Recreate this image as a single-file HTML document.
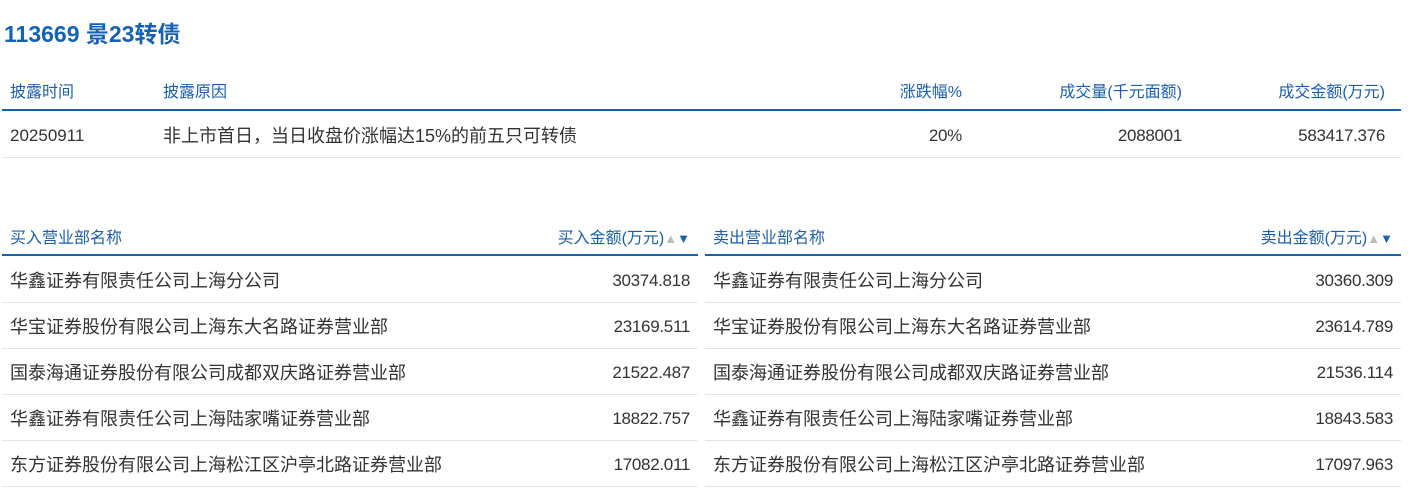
<!DOCTYPE html>
<html><head><meta charset="utf-8"><style>
body{margin:0;background:#fff;font-family:"Liberation Sans","Noto Sans CJK SC",sans-serif;color:#333;width:1413px;height:493px;overflow:hidden;position:relative}
.t{position:absolute;left:4px;top:20px;font-size:23px;line-height:28px;font-weight:bold;color:#1561b5}
table{position:absolute;border-collapse:collapse;table-layout:fixed}
th{font-weight:normal;color:#1a5fae;font-size:16px;line-height:20px;text-align:left;border-bottom:2px solid #1560b0;padding:3px 8px 0}
td{font-size:18px;line-height:22px;border-bottom:1px solid #e4e4e4;padding:4px 8px 0;white-space:nowrap}
td.r{font-size:17px;letter-spacing:-0.3px}
.r{text-align:right}
.s{color:#bbb;font-size:13px}.s b{color:#1a5fae;font-weight:normal}
</style></head><body>
<div class="t">113669 景23转债</div>
<table style="left:2px;top:74px;width:1399px">
<colgroup><col style="width:153px"><col style="width:670px"><col style="width:145px"><col style="width:220px"><col style="width:211px"></colgroup>
<tr style="height:36px"><th>披露时间</th><th>披露原因</th><th class="r">涨跌幅%</th><th class="r">成交量(千元面额)</th><th class="r" style="padding-right:16px">成交金额(万元)</th></tr>
<tr style="height:47px"><td style="font-size:17px">20250911</td><td>非上市首日，当日收盘价涨幅达15%的前五只可转债</td><td class="r">20%</td><td class="r">2088001</td><td class="r" style="padding-right:16px">583417.376</td></tr>
</table>
<table style="left:2px;top:220px;width:696px">
<colgroup><col style="width:500px"><col style="width:196px"></colgroup>
<tr style="height:35px"><th>买入营业部名称</th><th class="r">买入金额(万元)<span class="s">▲<b>▼</b></span></th></tr>
<tr style="height:47px"><td>华鑫证券有限责任公司上海分公司</td><td class="r">30374.818</td></tr>
<tr style="height:46px"><td>华宝证券股份有限公司上海东大名路证券营业部</td><td class="r">23169.511</td></tr>
<tr style="height:46px"><td>国泰海通证券股份有限公司成都双庆路证券营业部</td><td class="r">21522.487</td></tr>
<tr style="height:46px"><td>华鑫证券有限责任公司上海陆家嘴证券营业部</td><td class="r">18822.757</td></tr>
<tr style="height:46px"><td>东方证券股份有限公司上海松江区沪亭北路证券营业部</td><td class="r">17082.011</td></tr>
</table>
<table style="left:705px;top:220px;width:696px">
<colgroup><col style="width:500px"><col style="width:196px"></colgroup>
<tr style="height:35px"><th>卖出营业部名称</th><th class="r">卖出金额(万元)<span class="s">▲<b>▼</b></span></th></tr>
<tr style="height:47px"><td>华鑫证券有限责任公司上海分公司</td><td class="r">30360.309</td></tr>
<tr style="height:46px"><td>华宝证券股份有限公司上海东大名路证券营业部</td><td class="r">23614.789</td></tr>
<tr style="height:46px"><td>国泰海通证券股份有限公司成都双庆路证券营业部</td><td class="r">21536.114</td></tr>
<tr style="height:46px"><td>华鑫证券有限责任公司上海陆家嘴证券营业部</td><td class="r">18843.583</td></tr>
<tr style="height:46px"><td>东方证券股份有限公司上海松江区沪亭北路证券营业部</td><td class="r">17097.963</td></tr>
</table>
</body></html>
